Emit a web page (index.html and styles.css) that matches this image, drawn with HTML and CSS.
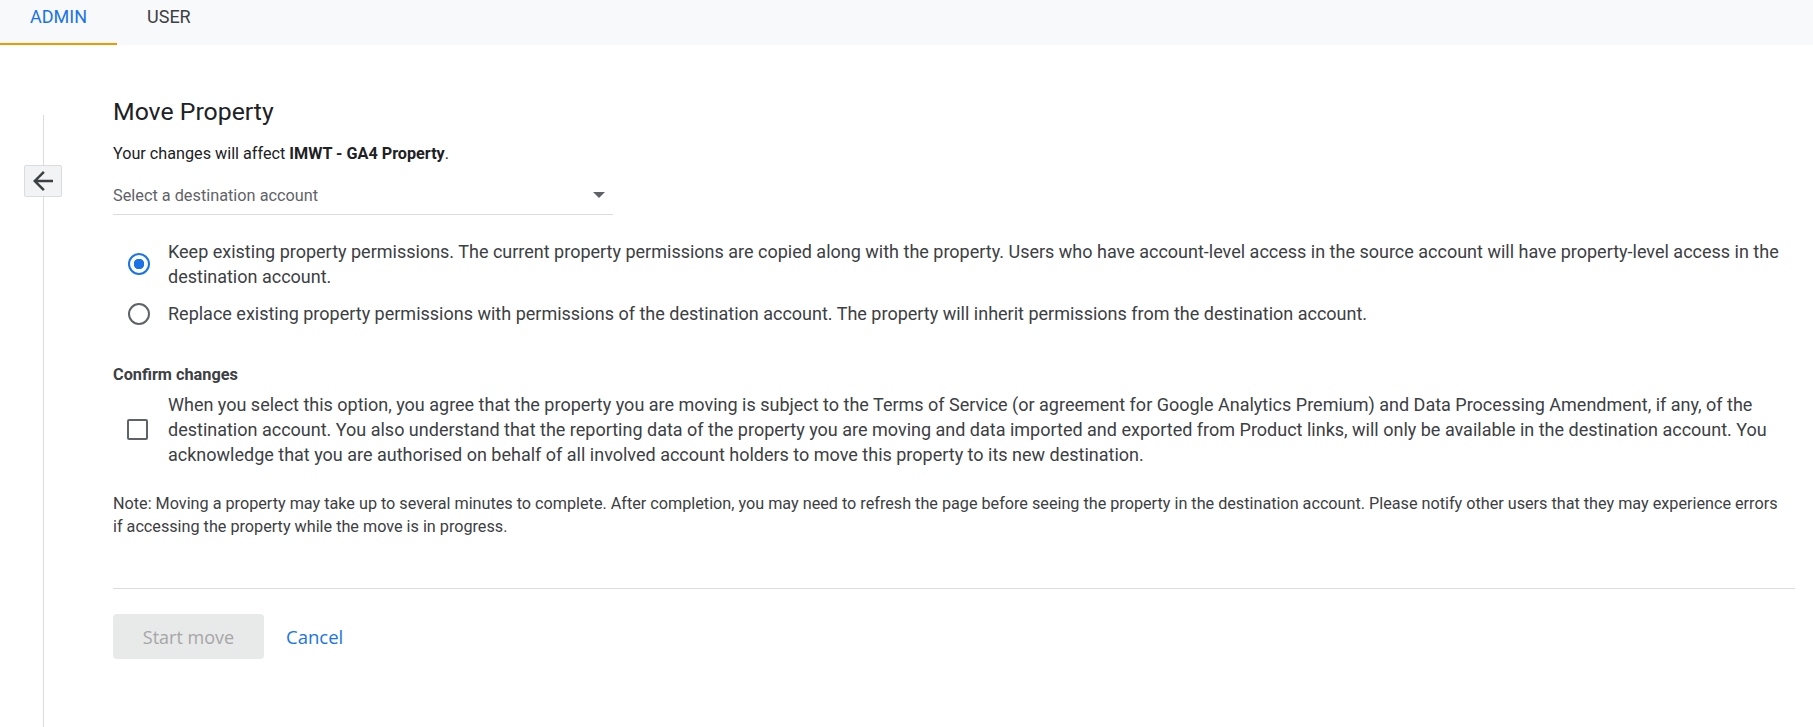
FILE: index.html
```html
<!DOCTYPE html>
<html lang="en">

<head>
  <meta charset="utf-8" />
  <title>Move Property</title>
  <link rel="stylesheet" href="styles.css">
</head>

<body>
  <div class="tabs">
    <div class="tab activo">ADMIN</div>
    <div class="tab">USER</div>
  </div>

  <div class="pagina">
    <div class="riel">
      <div class="riel-linea">
        <button class="volver" type="button">
          <svg width="30" height="30" viewBox="0 0 24 24">
            <path d="M20 11H7.83l5.59-5.59L12 4l-8 8 8 8 1.41-1.41L7.83 13H20v-2z" fill="#3c4043" />
          </svg>
        </button>
      </div>
    </div>

    <div class="contenido">
      <h1>Move Property</h1>
      <p class="afecta">Your changes will affect <b>IMWT - GA4 Property</b>.</p>

      <div class="selector">
        <span>Select a destination account</span>
        <span class="flecha"></span>
      </div>

      <div class="opciones">
        <label class="opcion">
          <span class="radio marcado"></span>
          <span class="texto">Keep existing property permissions. The current property permissions are copied along with the property. Users who have account-level access in the source account will have property-level access in the destination account.</span>
        </label>
        <label class="opcion">
          <span class="radio"></span>
          <span class="texto">Replace existing property permissions with permissions of the destination account. The property will inherit permissions from the destination account.</span>
        </label>
      </div>

      <h2>Confirm changes</h2>
      <label class="confirmar">
        <span class="caja"></span>
        <span class="texto">When you select this option, you agree that the property you are moving is subject to the Terms of Service (or agreement for Google Analytics Premium) and Data Processing Amendment, if any, of the destination account. You also understand that the reporting data of the property you are moving and data imported and exported from Product links, will only be available in the destination account. You acknowledge that you are authorised on behalf of all involved account holders to move this property to its new destination.</span>
      </label>

      <p class="nota">Note: Moving a property may take up to several minutes to complete. After completion, you may need to refresh the page before seeing the property in the destination account. Please notify other users that they may experience errors if accessing the property while the move is in progress.</p>

      <div class="acciones">
        <button class="boton-mover" type="button" disabled>Start move</button>
        <button class="boton-cancelar" type="button">Cancel</button>
      </div>
    </div>
  </div>
</body>

</html>
```

FILE: styles.css
```css
body {
  margin: 0;
  font-family: Roboto, "Liberation Sans", sans-serif;
  color: #202124;
  background-color: #fff;
}

.tabs {
  display: flex;
  height: 45px;
  background-color: #f8f9fa;
}

.tab {
  box-sizing: border-box;
  height: 45px;
  padding: 6px 30px 0;
  font-size: 18px;
  color: #3c4043;
}

.tab.activo {
  color: #1a73e8;
  border-bottom: 2px solid #f29900;
}

.pagina {
  display: flex;
  min-height: 682px;
}

.riel {
  width: 113px;
  flex-shrink: 0;
  padding-top: 70px;
  display: flex;
}

.riel-linea {
  margin-left: 43px;
  border-left: 1px solid #dadce0;
  padding-top: 50px;
  flex: 1;
}

.volver {
  margin-left: -20px;
  width: 38px;
  height: 32px;
  padding: 0;
  background-color: #f1f3f4;
  border: 1px solid #dadce0;
  border-radius: 2px;
  display: flex;
  align-items: center;
  justify-content: center;
}

.contenido {
  flex: 1;
  padding-right: 18px;
  padding-top: 51px;
}

h1 {
  margin: 0;
  font-size: 24.8px;
  font-weight: 400;
  line-height: 32px;
  color: #202124;
}

.afecta {
  margin: 15px 0 0;
  font-size: 16.2px;
  line-height: 22px;
}

.selector {
  width: 500px;
  height: 39px;
  margin-top: 11px;
  box-sizing: border-box;
  border-bottom: 1px solid #dadce0;
  display: flex;
  align-items: center;
  justify-content: space-between;
  font-size: 16.3px;
  color: #5f6368;
}

.flecha {
  margin-right: 8px;
  border-left: 6px solid transparent;
  border-right: 6px solid transparent;
  border-top: 6px solid #5f6368;
}

.opciones {
  margin-top: 24px;
}

.opcion,
.confirmar {
  display: flex;
  align-items: center;
  font-size: 18px;
  line-height: 25px;
  color: #3c4043;
}

.opcion + .opcion {
  margin-top: 12px;
}

.radio {
  width: 22px;
  height: 22px;
  box-sizing: border-box;
  margin: 0 18px 0 15px;
  flex-shrink: 0;
  border: 2px solid #5f6368;
  border-radius: 50%;
}

.radio.marcado {
  border-color: #1a73e8;
  background: radial-gradient(circle, #1a73e8 5px, transparent 5.5px);
}

h2 {
  margin: 38px 0 0;
  font-size: 16.3px;
  font-weight: 700;
  line-height: 22px;
  color: #3c4043;
}

.confirmar {
  margin-top: 6px;
}

.caja {
  width: 21px;
  height: 21px;
  box-sizing: border-box;
  margin: 0 20px 0 14px;
  flex-shrink: 0;
  border: 2px solid #5f6368;
  border-radius: 2px;
}

.nota {
  margin: 25px 0 0;
  padding-right: 12px;
  font-size: 16.2px;
  line-height: 23px;
  color: #3c4043;
}

.acciones {
  margin-top: 50px;
  padding-top: 25px;
  border-top: 1px solid #dadce0;
  display: flex;
  align-items: center;
  gap: 22px;
}

.boton-mover {
  width: 151px;
  height: 45px;
  border: none;
  border-radius: 4px;
  background-color: #e8e9e9;
  color: #a5a6a6;
  font-family: "Open Sans", Roboto, sans-serif;
  font-size: 18px;
  font-weight: 500;
}

.boton-cancelar {
  border: none;
  background: none;
  padding: 0;
  color: #1a73e8;
  font-family: "Open Sans", Roboto, sans-serif;
  font-size: 18.5px;
  font-weight: 500;
}
```
